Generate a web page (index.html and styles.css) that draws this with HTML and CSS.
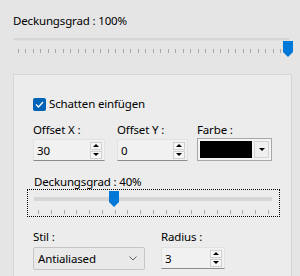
FILE: index.html
```html
<!DOCTYPE html>
<html lang="de">
<head>
    <meta charset="UTF-8">
    <meta name="viewport" content="width=device-width, initial-scale=1.0">
    <title>Schatten</title>
    <link rel="stylesheet" href="styles.css">
</head>
<body>
    <div class="opacity">
        <div class="label">Deckungsgrad : 100%</div>
        <div class="slider slider-main">
            <div class="track"></div>
            <div class="ticks"></div>
            <svg class="thumb" width="10" height="16" viewBox="0 0 10 16">
                <polygon points="0,0 10,0 10,11 5,16 0,11" fill="#0078d7"/>
            </svg>
        </div>
    </div>

    <div class="group">
        <div class="check-row">
            <span class="checkbox">
                <svg width="13" height="13" viewBox="0 0 13 13">
                    <polyline points="3,6.5 5.5,9 10,4" fill="none" stroke="#fff" stroke-width="1.3"/>
                </svg>
            </span>
            Schatten einfügen
        </div>

        <div class="fields">
            <div class="field">
                <div class="label">Offset X :</div>
                <div class="spin-box">
                    <span class="value">30</span>
                    <div class="spinner">
                        <span class="spin-btn"><i class="arrow-up"></i></span>
                        <span class="spin-btn"><i class="arrow-down"></i></span>
                    </div>
                </div>
            </div>
            <div class="field">
                <div class="label">Offset Y :</div>
                <div class="spin-box spin-box-y">
                    <span class="value">0</span>
                    <div class="spinner">
                        <span class="spin-btn"><i class="arrow-up"></i></span>
                        <span class="spin-btn"><i class="arrow-down"></i></span>
                    </div>
                </div>
            </div>
            <div class="field">
                <div class="label">Farbe :</div>
                <div class="color-combo">
                    <span class="swatch"></span>
                    <span class="color-btn"><i class="arrow-down"></i></span>
                </div>
            </div>
        </div>

        <div class="shadow-opacity">
            <div class="label">Deckungsgrad : 40%</div>
            <div class="focus-box">
                <div class="track"></div>
                <div class="ticks"></div>
                <svg class="thumb" width="10" height="16" viewBox="0 0 10 16">
                    <polygon points="0,0 10,0 10,11 5,16 0,11" fill="#0078d7"/>
                </svg>
            </div>
        </div>

        <div class="style-row">
            <div class="field">
                <div class="label">Stil :</div>
                <div class="combo">
                    <span>Antialiased</span>
                    <svg width="8" height="5" viewBox="0 0 8 5">
                        <polyline points="0.5,0.5 4,4 7.5,0.5" fill="none" stroke="#606060" stroke-width="1"/>
                    </svg>
                </div>
            </div>
            <div class="field">
                <div class="label">Radius :</div>
                <div class="spin-box spin-box-radius">
                    <span class="value">3</span>
                    <div class="spinner">
                        <span class="spin-btn"><i class="arrow-up"></i></span>
                        <span class="spin-btn"><i class="arrow-down"></i></span>
                    </div>
                </div>
            </div>
        </div>
    </div>
</body>
</html>
```

FILE: styles.css
```css
* {
    box-sizing: border-box;
}

body {
    margin: 0;
    padding: 0 8px 0 13px;
    height: 276px;
    overflow: hidden;
    background: #e5e5e5;
    color: #000;
    font-family: "Noto Sans", "Open Sans", sans-serif;
    font-size: 11.5px;
    letter-spacing: -0.15px;
}

.label {
    line-height: 16px;
    white-space: nowrap;
}

/* Top opacity slider */
.opacity {
    padding-top: 13px;
}

.slider-main {
    position: relative;
    height: 26px;
}

.slider-main .track {
    margin-top: 9px;
    width: 276px;
    height: 3px;
    background: #d6d6d6;
    border-bottom: 1px solid #e0e0e0;
}

.slider-main .ticks {
    margin: 8px 0 0 5px;
    width: 271px;
    height: 4px;
    background: repeating-linear-gradient(90deg, #a9a9a9 0 1px, transparent 1px 7.5px);
}

.slider-main .thumb {
    position: absolute;
    top: 3px;
    left: 270px;
}

/* Group box */
.group {
    margin-top: 10px;
    height: 211px;
    padding: 21px 0 0 19px;
    background: #ececec;
    border: 1px solid #d6d6d6;
    border-bottom: none;
}

.check-row {
    display: flex;
    align-items: center;
    gap: 3px;
    line-height: 16px;
}

.checkbox {
    display: flex;
    width: 13px;
    height: 13px;
    border-radius: 2px;
    background: #0063b8;
}

.fields {
    display: grid;
    grid-template-columns: 84px 80px 75px;
    margin-top: 10px;
}

.field .label {
    margin-bottom: 1px;
}

/* Numeric up/down */
.spin-box {
    display: flex;
    align-items: center;
    justify-content: space-between;
    width: 72px;
    height: 22px;
    padding: 0 2px 0 3px;
    background: #f1f1f1;
    border: 1px solid #e2e2e2;
    border-bottom-color: #8c8c8c;
}

.spin-box-y {
    width: 71px;
}

.spin-box-radius {
    width: 64px;
}

.spinner {
    display: flex;
    flex-direction: column;
    gap: 1px;
}

.spin-btn {
    display: flex;
    align-items: center;
    justify-content: center;
    width: 12px;
    height: 8px;
    background: #f7f7f7;
    border: 1px solid #cfcfcf;
}

.arrow-up,
.arrow-down {
    width: 0;
    height: 0;
    border-left: 3px solid transparent;
    border-right: 3px solid transparent;
}

.arrow-up {
    border-bottom: 3px solid #000;
}

.arrow-down {
    border-top: 3px solid #000;
}

/* Colour picker */
.color-combo {
    display: flex;
    gap: 2px;
    width: 75px;
    height: 23px;
    margin-top: -1px;
    padding: 2px;
    background: #f4f4f4;
    border: 1px solid #a8a8a8;
}

.swatch {
    flex: 1;
    background: #000;
}

.color-btn {
    display: flex;
    align-items: center;
    justify-content: center;
    width: 15px;
    background: #f0f0f0;
    border: 1px solid #d4d4d4;
}

/* Shadow opacity slider */
.shadow-opacity {
    margin-top: 14px;
}

.shadow-opacity .label {
    line-height: 14px;
    margin-left: 1px;
}

.focus-box {
    position: relative;
    width: 253px;
    height: 28px;
    margin-left: -6px;
    border: 1px dotted #000;
}

.focus-box .track {
    margin: 7px 0 0 6px;
    width: 238px;
    height: 4px;
    background: #d6d6d6;
}

.focus-box .ticks {
    margin: 9px 0 0 10px;
    width: 231px;
    height: 4px;
    background: repeating-linear-gradient(90deg, #a9a9a9 0 1px, transparent 1px 12.78px);
}

.focus-box .thumb {
    position: absolute;
    top: 1px;
    left: 81px;
}

/* Style + radius */
.style-row {
    display: grid;
    grid-template-columns: 128px 64px;
    margin-top: 12px;
}

.style-row .field .label {
    margin-bottom: 2px;
}

.combo {
    display: flex;
    align-items: center;
    justify-content: space-between;
    width: 112px;
    height: 23px;
    padding: 0 7px 0 4px;
    background: #e9e9e9;
    border: 1px solid #c6c6c6;
    border-radius: 2px;
}
```
